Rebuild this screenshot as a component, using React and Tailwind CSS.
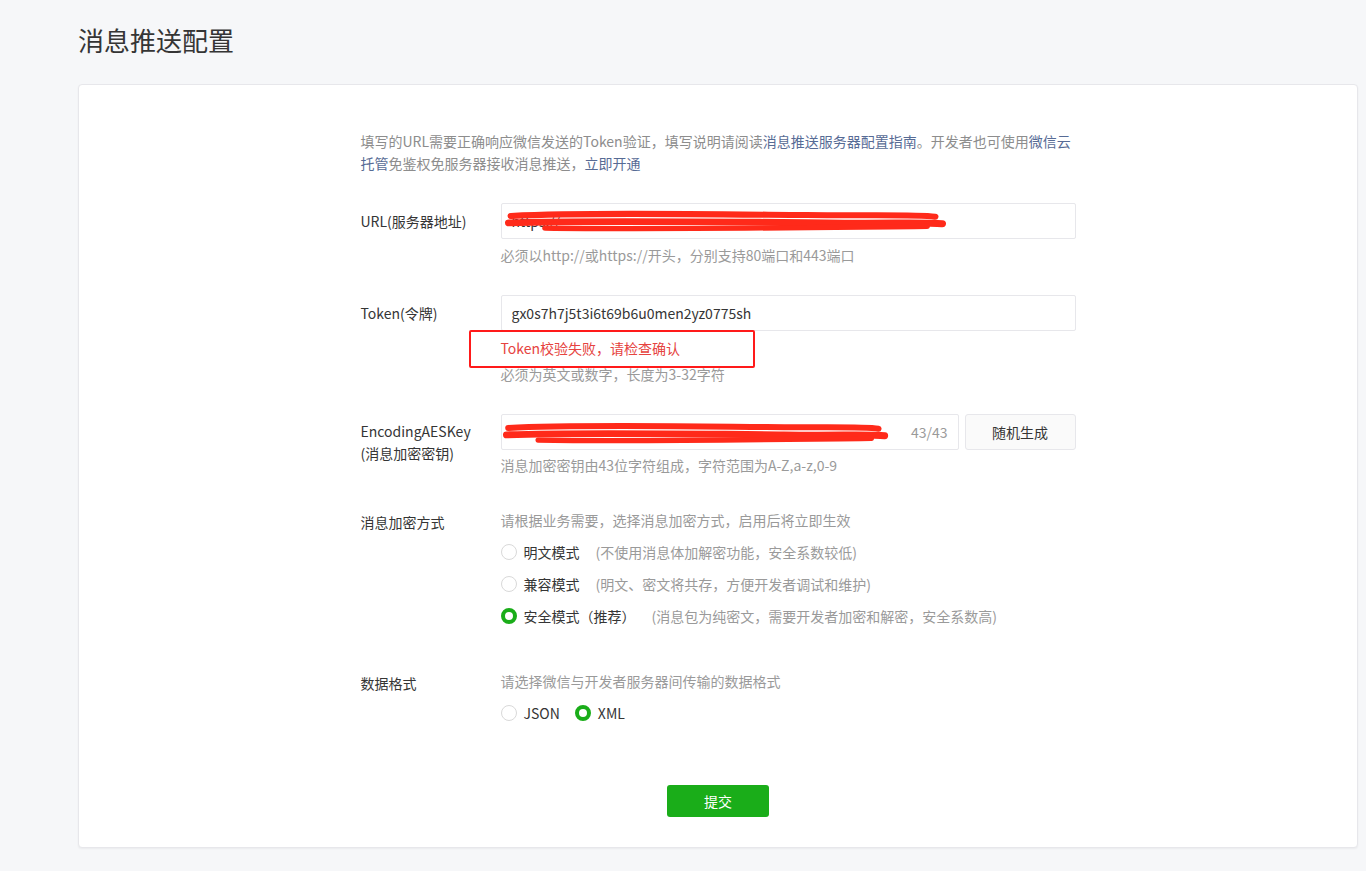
import React from 'react'

const font = { fontFamily: '"Noto Sans CJK SC", "Noto Sans", sans-serif' }

function Radio({ checked }) {
    return checked ? (
        <span className="inline-block w-4 h-4 rounded-full border-[4px] border-[#1aad19] bg-white shrink-0" />
    ) : (
        <span className="inline-block w-4 h-4 rounded-full border border-[#d9d9d9] bg-white shrink-0" />
    )
}

function Scribble({ className }) {
    return (
        <svg className={className} viewBox="0 0 440 30" preserveAspectRatio="none">
            <path d="M6 8 C80 4 200 6 300 7 C360 8 410 6 428 9" stroke="#ff2a1a" strokeWidth="7" fill="none" strokeLinecap="round" />
            <path d="M4 16 C90 13 200 15 320 16 C380 17 420 15 435 17" stroke="#ff2a1a" strokeWidth="8" fill="none" strokeLinecap="round" />
            <path d="M40 22 C150 24 260 22 420 20" stroke="#ff2a1a" strokeWidth="6" fill="none" strokeLinecap="round" />
        </svg>
    )
}

export default function App() {
    return (
        <div className="min-h-[871px] bg-[#f6f7f9] text-[#353535] text-[14px]" style={font}>
            <div className="pl-[78px] pr-2 pt-[20px]">
                <h1 className="text-[26px] leading-[40px] font-normal text-[#353535]">消息推送配置</h1>
                <div className="mt-[24px] bg-white border border-[#e7e7eb] rounded-[4px] shadow-[0_1px_2px_rgba(0,0,0,0.05)] pt-[45px] pb-[30px]">
                    <div className="w-[715px] mx-auto">
                        <p className="leading-[22px] text-[#8d8d8d]">
                            填写的URL需要正确响应微信发送的Token验证，填写说明请阅读<span className="text-[#576b95]">消息推送服务器配置指南</span>。开发者也可使用<span className="text-[#576b95]">微信云托管</span>免鉴权免服务器接收消息推送，<span className="text-[#576b95]">立即开通</span>
                        </p>

                        <div className="flex mt-[29px]">
                            <div className="w-[140px] leading-[36px]">URL(服务器地址)</div>
                            <div className="flex-1">
                                <div className="relative h-[36px] border border-[#e7e7eb] rounded-[2px] px-[10px] leading-[34px] text-[#353535]">
                                    https://
                                    <Scribble className="absolute left-[3px] top-[5px] w-[442px] h-[26px]" />
                                </div>
                                <p className="mt-[5px] leading-[22px] text-[#9a9a9a]">必须以http://或https://开头，分别支持80端口和443端口</p>
                            </div>
                        </div>

                        <div className="flex mt-[29px]">
                            <div className="w-[140px] leading-[36px]">Token(令牌)</div>
                            <div className="flex-1 relative">
                                <div className="h-[36px] border border-[#e7e7eb] rounded-[2px] px-[10px] leading-[34px] text-[#353535]">gx0s7h7j5t3i6t69b6u0men2yz0775sh</div>
                                <p className="mt-[6px] leading-[22px] text-[#e64340]">Token校验失败，请检查确认</p>
                                <p className="mt-[4px] leading-[22px] text-[#9a9a9a]">必须为英文或数字，长度为3-32字符</p>
                                <div className="absolute left-[-32px] top-[35px] w-[286px] h-[38px] border-2 border-[#ff1a1a] rounded-[2px]" />
                            </div>
                        </div>

                        <div className="flex mt-[29px]">
                            <div className="w-[140px] leading-[22px] pt-[6px]">EncodingAESKey<br />(消息加密密钥)</div>
                            <div className="flex-1">
                                <div className="flex gap-[6px]">
                                    <div className="relative flex-1 h-[36px] border border-[#e7e7eb] rounded-[2px] px-[10px] leading-[34px] flex justify-end text-[#9a9a9a]">
                                        43/43
                                        <Scribble className="absolute left-[1px] top-[6px] w-[386px] h-[26px]" />
                                    </div>
                                    <button className="w-[111px] h-[36px] border border-[#e7e7eb] bg-[#fafafa] rounded-[3px] text-[#353535]">随机生成</button>
                                </div>
                                <p className="mt-[4px] leading-[22px] text-[#9a9a9a]">消息加密密钥由43位字符组成，字符范围为A-Z,a-z,0-9</p>
                            </div>
                        </div>

                        <div className="flex mt-[33px]">
                            <div className="w-[140px] leading-[22px] pt-[2px]">消息加密方式</div>
                            <div className="flex-1">
                                <p className="leading-[22px] text-[#9a9a9a]">请根据业务需要，选择消息加密方式，启用后将立即生效</p>
                                <div className="mt-[5px] flex flex-col">
                                    <div className="flex items-center h-[32px]">
                                        <Radio />
                                        <span className="ml-[7px]">明文模式</span>
                                        <span className="ml-[16px] text-[#9a9a9a]">(不使用消息体加解密功能，安全系数较低)</span>
                                    </div>
                                    <div className="flex items-center h-[32px]">
                                        <Radio />
                                        <span className="ml-[7px]">兼容模式</span>
                                        <span className="ml-[16px] text-[#9a9a9a]">(明文、密文将共存，方便开发者调试和维护)</span>
                                    </div>
                                    <div className="flex items-center h-[32px]">
                                        <Radio checked />
                                        <span className="ml-[7px]">安全模式（推荐）</span>
                                        <span className="ml-[16px] text-[#9a9a9a]">(消息包为纯密文，需要开发者加密和解密，安全系数高)</span>
                                    </div>
                                </div>
                            </div>
                        </div>

                        <div className="flex mt-[38px]">
                            <div className="w-[140px] leading-[22px] pt-[2px]">数据格式</div>
                            <div className="flex-1">
                                <p className="leading-[22px] text-[#9a9a9a]">请选择微信与开发者服务器间传输的数据格式</p>
                                <div className="mt-[5px] flex items-center h-[32px]">
                                    <Radio />
                                    <span className="ml-[7px]">JSON</span>
                                    <span className="ml-[15px] flex"><Radio checked /></span>
                                    <span className="ml-[7px]">XML</span>
                                </div>
                            </div>
                        </div>

                        <div className="flex justify-center mt-[56px]">
                            <button className="w-[102px] h-[32px] bg-[#1aad19] text-white rounded-[3px] text-[14px]">提交</button>
                        </div>
                    </div>
                </div>
            </div>
        </div>
    )
}
